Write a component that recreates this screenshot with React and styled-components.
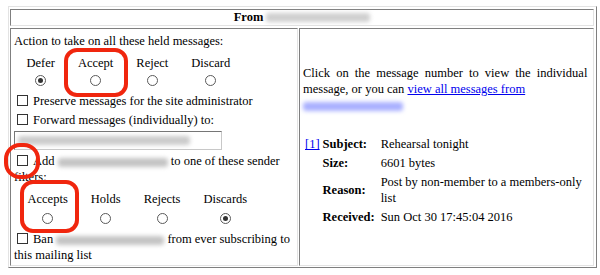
import React from 'react';
import styled, { createGlobalStyle } from 'styled-components';

const GlobalStyle = createGlobalStyle`
  html, body {
    margin: 0;
    padding: 0;
    background: #fff;
  }
  body {
    font-family: "Liberation Serif", "DejaVu Serif", serif;
    font-size: 12.5px;
    line-height: 16px;
    color: #000;
  }
`;

const Page = styled.div`
  position: relative;
  width: 600px;
  height: 275px;
  padding: 6px 0 0 8px;
  box-sizing: border-box;
  font-family: "Liberation Serif", "DejaVu Serif", serif;
  font-size: 12.5px;
  line-height: 16px;
`;

const Frame = styled.div`
  width: 589px;
  height: 262px;
  box-sizing: border-box;
  border: 1px solid;
  border-color: #e3e3e3 #7f7f7f #7f7f7f #e3e3e3;
  padding: 2px 2px 1px 1px;
  display: grid;
  grid-template-columns: 288px 1fr;
  grid-template-rows: 17px 1fr;
  column-gap: 1px;
  row-gap: 2px;
`;

const Cell = styled.div`
  border: 1px solid;
  border-color: #7f7f7f #e3e3e3 #e3e3e3 #7f7f7f;
  box-sizing: border-box;
  min-width: 0;
`;

const HeaderCell = styled(Cell)`
  grid-column: 1 / 3;
  display: flex;
  align-items: center;
  justify-content: center;
  gap: 3px;
  font-weight: bold;
  line-height: 15px;
`;

const LeftCell = styled(Cell)`
  padding: 4px 3px 0 3px;
`;

const RightCell = styled(Cell)`
  padding: 0 3px 2px 3px;
  display: flex;
  flex-direction: column;
  justify-content: center;
`;

const Line = styled.div``;

const Blur = styled.span`
  display: inline-block;
  width: ${(p) => p.$w}px;
  height: 9px;
  vertical-align: middle;
  background: ${(p) => p.$tone || '#c4c4c4'};
  filter: blur(2px);
  border-radius: 3px;
`;

const Choices = styled.div`
  display: flex;
  margin: ${(p) => p.$mt}px 0 0 ${(p) => p.$ml}px;
`;

const Choice = styled.div`
  display: flex;
  flex-direction: column;
  align-items: center;
  padding: 0 ${(p) => p.$pad}px;
  row-gap: ${(p) => p.$gap}px;
`;

const Radio = styled.span`
  width: 11px;
  height: 11px;
  box-sizing: border-box;
  border-radius: 50%;
  border: 1px solid #5a5a5a;
  background: #fff;
  display: flex;
  align-items: center;
  justify-content: center;

  &::after {
    content: '';
    width: 5px;
    height: 5px;
    border-radius: 50%;
    background: ${(p) => (p.$checked ? '#333' : 'transparent')};
  }
`;

const CheckLine = styled.div`
  margin-top: ${(p) => p.$mt}px;
`;

const Box = styled.span`
  display: inline-block;
  width: 11px;
  height: 11px;
  box-sizing: border-box;
  border: 1px solid #333;
  background: #fff;
  margin: 0 5px 0 3px;
  vertical-align: -1px;
`;

const TextField = styled.div`
  margin-top: 3px;
  width: 208px;
  height: 19px;
  box-sizing: border-box;
  border: 1px solid;
  border-color: #767676 #c8c8c8 #c8c8c8 #767676;
  display: flex;
  align-items: center;
  padding-left: 3px;
`;

const Para = styled.p`
  margin: 0 0 21.5px 0;

  &::first-line {
    word-spacing: 3px;
  }
`;

const Link = styled.a`
  color: #0000ee;
  text-decoration: underline;
`;

const Details = styled.div`
  display: grid;
  grid-template-columns: auto auto 1fr;
  column-gap: 3px;
  margin-left: 2px;
`;

const DCell = styled.div`
  padding: 1.5px 0;
  display: flex;
  align-items: center;
`;

const Label = styled(DCell)`
  font-weight: bold;
  padding-right: 3px;
`;

const Ring = styled.div`
  position: absolute;
  left: ${(p) => p.$x}px;
  top: ${(p) => p.$y}px;
  width: ${(p) => p.$w}px;
  height: ${(p) => p.$h}px;
  box-sizing: border-box;
  border: 4px solid #f0260e;
  border-radius: ${(p) => p.$r}px;
  pointer-events: none;
`;

const actions = [
  { label: 'Defer', checked: true },
  { label: 'Accept' },
  { label: 'Reject' },
  { label: 'Discard' },
];

const filters = [
  { label: 'Accepts' },
  { label: 'Holds' },
  { label: 'Rejects' },
  { label: 'Discards', checked: true },
];

const details = [
  { label: 'Subject:', value: 'Rehearsal tonight' },
  { label: 'Size:', value: '6601 bytes' },
  { label: 'Reason:', value: 'Post by non-member to a members-only list' },
  { label: 'Received:', value: 'Sun Oct 30 17:45:04 2016' },
];

const App = () => (
  <Page>
    <GlobalStyle />
    <Frame>
      <HeaderCell>
        From <Blur $w={104} $tone="#cfcfcf" />
      </HeaderCell>
      <LeftCell>
        <Line>Action to take on all these held messages:</Line>
        <Choices $mt={6} $ml={1}>
          {actions.map((a) => (
            <Choice key={a.label} $pad={11.5} $gap={4}>
              {a.label}
              <Radio $checked={a.checked} />
            </Choice>
          ))}
        </Choices>
        <CheckLine $mt={7}>
          <Box />
          Preserve messages for the site administrator
        </CheckLine>
        <CheckLine $mt={3}>
          <Box />
          Forward messages (individually) to:
        </CheckLine>
        <TextField>
          <Blur $w={172} $tone="#cbcbcb" />
        </TextField>
        <CheckLine $mt={3}>
          <Box />
          Add <Blur $w={110} /> to one of these sender filters:
        </CheckLine>
        <Choices $mt={6} $ml={2}>
          {filters.map((f) => (
            <Choice key={f.label} $pad={11.5} $gap={6}>
              {f.label}
              <Radio $checked={f.checked} />
            </Choice>
          ))}
        </Choices>
        <CheckLine $mt={7}>
          <Box />
          Ban <Blur $w={108} /> from ever subscribing to this mailing list
        </CheckLine>
      </LeftCell>
      <RightCell>
        <Para>
          Click on the message number to view the individual message, or you can{' '}
          <Link href="#">view all messages from</Link>
          <br />
          <Blur $w={100} $tone="#a9b0ff" />
        </Para>
        <Details>
          {details.map((d, i) => (
            <React.Fragment key={d.label}>
              <DCell>{i === 0 ? <Link href="#">[1]</Link> : ''}</DCell>
              <Label>{d.label}</Label>
              <DCell>{d.value}</DCell>
            </React.Fragment>
          ))}
        </Details>
      </RightCell>
    </Frame>
    <Ring $x={64} $y={48} $w={64} $h={49} $r={13} />
    <Ring $x={4} $y={143} $w={36} $h={36} $r={16} />
    <Ring $x={20} $y={180} $w={59} $h={53} $r={13} />
  </Page>
);

export default App;
